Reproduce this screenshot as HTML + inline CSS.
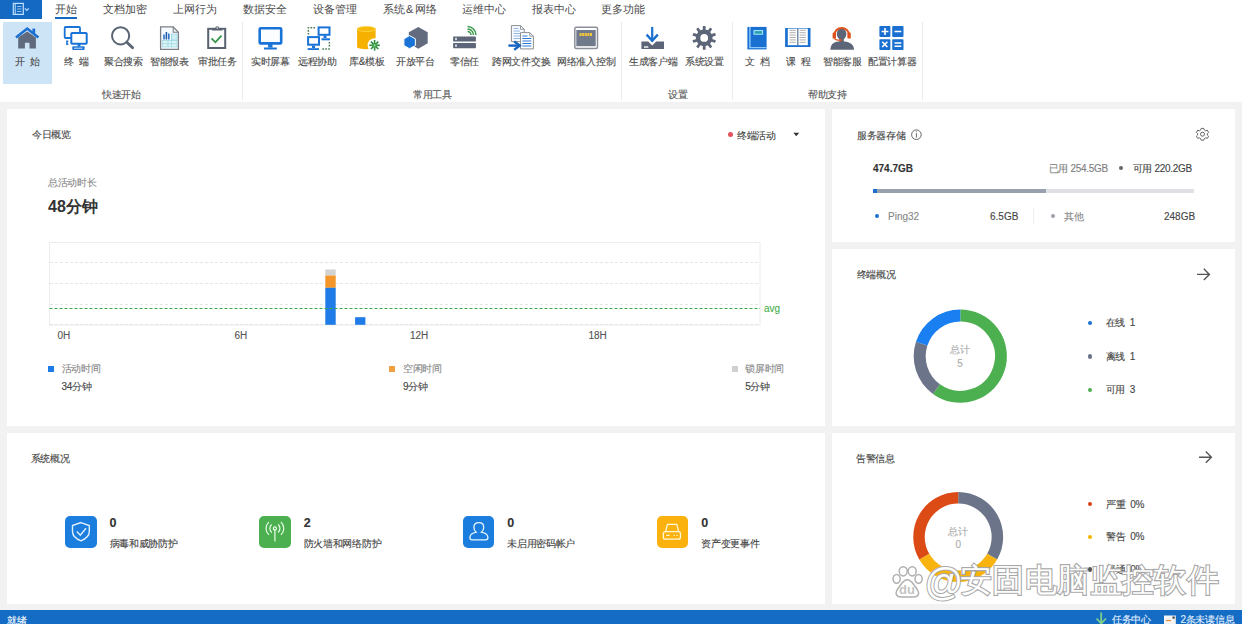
<!DOCTYPE html>
<html><head><meta charset="utf-8">
<style>
*{box-sizing:border-box}
html,body{margin:0;padding:0}
body{width:1242px;height:624px;position:relative;overflow:hidden;background:#f2f2f2;font-family:"Liberation Sans",sans-serif;color:#444}
.a{position:absolute;white-space:nowrap}
.t{position:absolute;white-space:nowrap;line-height:1;-webkit-text-stroke:0.12px currentColor}
.tab{font-size:11px;color:#4a4a4a;top:4px;-webkit-text-stroke:0}
.lb{font-size:10px;letter-spacing:-0.3px;color:#4a4a4a;top:56.6px}
.gl{font-size:10px;letter-spacing:-0.3px;color:#555;top:90px}
.sep{position:absolute;top:21.5px;width:1px;height:78.5px;background:#ececec}
.panel{position:absolute;background:#fff}
.ic{position:absolute}
</style></head>
<body>
<!-- ribbon -->
<div class="a" style="left:0;top:0;width:1242px;height:102px;background:#fff"></div>
<div class="a" style="left:0;top:0;width:42px;height:19px;background:#1469c2"></div>
<div class="a" style="left:55px;top:17px;width:22px;height:2px;background:#1469c2"></div>
<div class="t tab" style="left:55px">开始</div>
<div class="t tab" style="left:103px">文档加密</div>
<div class="t tab" style="left:173px">上网行为</div>
<div class="t tab" style="left:243px">数据安全</div>
<div class="t tab" style="left:313px">设备管理</div>
<div class="t tab" style="left:382.5px">系统<span style="margin:0 1.5px">&amp;</span>网络</div>
<div class="t tab" style="left:462px">运维中心</div>
<div class="t tab" style="left:532px">报表中心</div>
<div class="t tab" style="left:601px">更多功能</div>

<div class="a" style="left:3px;top:22px;width:49px;height:62px;background:#cde4f7"></div>

<svg class="a" style="left:0;top:0" width="1242" height="102" viewBox="0 0 1242 102">
<!-- app button icon -->
<rect x="13.3" y="3.4" width="10" height="11" fill="none" stroke="#bfe0ff" stroke-width="1.2"/>
<line x1="15.2" y1="3.5" x2="15.2" y2="14.5" stroke="#bfe0ff" stroke-width="1"/>
<path d="M17 6.5h4.5M17 9h4.5M17 11.5h4.5" stroke="#9fcaf2" stroke-width="0.9"/>
<path d="M24.8 8.3l2 2 2-2" fill="none" stroke="#bfe0ff" stroke-width="1.2"/>
<!-- home -->
<path d="M18.2 37.5L27.2 31.5L35.9 37.5V48.4H29.5V42.8H24.9V48.4H18.2Z" fill="#5f6a7d"/>
<path d="M16 37.4L27.2 28.6L38.4 37.6" fill="none" stroke="#1a6fd0" stroke-width="2.6" stroke-linejoin="miter"/>
<rect x="32.4" y="28.6" width="2.8" height="4.6" fill="#1a6fd0"/>
<!-- terminal -->
<rect x="64.7" y="27" width="15.3" height="11" rx="1" fill="none" stroke="#1a73d6" stroke-width="1.8"/>
<path d="M68.3 41.2h-1.4v3h1.4" fill="none" stroke="#1a73d6" stroke-width="1.5"/>
<rect x="71.3" y="33" width="15.4" height="10.8" rx="0.8" fill="#fff" stroke="#1a73d6" stroke-width="2"/>
<rect x="77.6" y="43.5" width="2.8" height="3" fill="#1a73d6"/>
<rect x="72.3" y="46.3" width="12.3" height="3.7" rx="1" fill="#1a73d6"/>
<line x1="74" y1="48.2" x2="82.5" y2="48.2" stroke="#fff" stroke-width="0.8"/>
<!-- search -->
<circle cx="120.6" cy="35.8" r="8.6" fill="none" stroke="#5a6475" stroke-width="2"/>
<line x1="126.8" y1="42.2" x2="132.6" y2="47.8" stroke="#5a6475" stroke-width="2.8" stroke-linecap="round"/>
<!-- report -->
<path d="M160.6 26.8H173.2L178.4 32.2V49.3H160.6Z" fill="#f6fbff" stroke="#7c7f85" stroke-width="1.3"/>
<path d="M173.2 26.8V32.2H178.4" fill="none" stroke="#7c7f85" stroke-width="1.1"/>
<rect x="163.2" y="34.5" width="1.6" height="5" fill="#2a72c8"/>
<rect x="165.6" y="32" width="1.6" height="7.5" fill="#1f5faa"/>
<rect x="168" y="33.5" width="1.6" height="6" fill="#2a72c8"/>
<rect x="171.5" y="34" width="5.5" height="6" fill="#cdeff4" stroke="#8fd0dc" stroke-width="0.6"/>
<rect x="162.5" y="40.5" width="14.5" height="6.5" fill="#d8f4f4" stroke="#8fd0dc" stroke-width="0.6"/>
<path d="M162.5 43.7H177M168 40.5V47M171.5 34V47" stroke="#8fd0dc" stroke-width="0.6"/>
<!-- approval -->
<rect x="208.2" y="28.8" width="17" height="19.2" fill="#fdfdfd" stroke="#596270" stroke-width="2"/>
<path d="M211.8 30.4L212.8 28.2H215.3A1.9 1.9 0 0 1 219.1 28.2H221.6L222.6 30.4Z" fill="#596270"/><circle cx="217.2" cy="27.9" r="0.75" fill="#fff"/>
<path d="M211.5 38.4L215.4 42.3L221.5 35.6" fill="none" stroke="#35964a" stroke-width="1.8"/>
<!-- realtime screen -->
<rect x="259.7" y="28.2" width="21.5" height="15.2" rx="1" fill="#fbfdff" stroke="#1a73d6" stroke-width="2.6"/>
<rect x="268.1" y="44" width="4.4" height="3.6" fill="#1a73d6"/>
<rect x="264" y="47.5" width="12.8" height="2" fill="#1a73d6"/>
<!-- remote assist -->
<rect x="318.6" y="27.4" width="10.9" height="7.4" fill="#fff" stroke="#1a73d6" stroke-width="2"/>
<rect x="323.5" y="35.5" width="3" height="2.5" fill="#1a73d6"/>
<rect x="321.5" y="38.3" width="8.5" height="2" fill="#1a73d6"/>
<rect x="308.1" y="37.1" width="10.9" height="7.6" fill="#fff" stroke="#1a73d6" stroke-width="2"/>
<rect x="312" y="45.5" width="3" height="2.5" fill="#1a73d6"/>
<rect x="307.6" y="48.2" width="11.4" height="1.8" fill="#1a73d6"/>
<path d="M307.6 27.7h1.6M310.5 27.7h1.6M313.4 27.7h1.6M308.4 30.1v1.6M308.4 33v1.6" stroke="#4a7a52" stroke-width="1.5"/>
<path d="M322.4 49h1.6M325.3 49h1.6M328.2 49h1.6M329.4 41.9v1.6M329.4 44.8v1.6" stroke="#4a7a52" stroke-width="1.5"/>
<!-- library -->
<path d="M357.1 29V47.2A9.25 2 0 0 0 375.6 47.2V29Z" fill="#f5b000"/>
<ellipse cx="366.35" cy="29" rx="9.25" ry="2.6" fill="#f7b90a" stroke="#ffd64a" stroke-width="0.8"/>
<circle cx="374.6" cy="45.3" r="7" fill="#fff"/>
<g stroke="#2e8b3d" stroke-width="1.6">
<line x1="374.6" y1="40" x2="374.6" y2="50.6"/><line x1="369.3" y1="45.3" x2="379.9" y2="45.3"/>
<line x1="370.9" y1="41.6" x2="378.3" y2="49"/><line x1="378.3" y1="41.6" x2="370.9" y2="49"/>
</g>
<circle cx="374.6" cy="45.3" r="2.2" fill="#3aa04a"/>
<circle cx="374.6" cy="45.3" r="0.9" fill="#b8f0b0"/>
<!-- open platform -->
<path d="M418.3 26.9L427.7 32.3V43.3L418.3 48.7L408.8 43.3V32.3Z" fill="#626c7e"/>
<path d="M409.5 35.6L415.4 38.8V45.5L409.5 48.7L403.9 45.5V38.8Z" fill="#1a73d6" stroke="#fff" stroke-width="1"/>
<!-- zero trust -->
<rect x="453.1" y="36.4" width="22.8" height="5.1" rx="0.6" fill="#5c6678"/>
<rect x="453.1" y="43.1" width="22.8" height="5.1" rx="0.6" fill="#5c6678"/>
<rect x="455.3" y="37.8" width="1.4" height="2.3" fill="#fff"/>
<rect x="455.3" y="44.5" width="1.4" height="2.3" fill="#fff"/>
<g fill="none" stroke="#3a9a4a" stroke-width="1.5">
<path d="M467.5 31.5A3.5 3.5 0 0 1 471 35"/>
<path d="M467.5 29A6 6 0 0 1 473.5 35"/>
<path d="M467.5 26.5A8.5 8.5 0 0 1 476 35"/>
</g>
<!-- file exchange -->
<path d="M511.4 25.6H520.5L524.2 29.3V41.6H511.4Z" fill="#f8fbff" stroke="#8c8f95" stroke-width="1"/>
<path d="M520.5 25.6V29.3H524.2" fill="none" stroke="#8c8f95" stroke-width="0.9"/>
<path d="M513.5 28.5h5M513.5 31h6.5M513.5 33.5h6.5M513.5 36h6.5M513.5 38.5h6.5" stroke="#7aa7dd" stroke-width="0.8"/>
<path d="M520.5 32.6H529.8L533.4 36.2V48.9H520.5Z" fill="#fff" stroke="#8c8f95" stroke-width="1"/>
<path d="M529.8 32.6V36.2H533.4" fill="none" stroke="#8c8f95" stroke-width="0.9"/>
<path d="M522.3 36h5.2M522.3 38.5h9M522.3 41h9M522.3 43.5h9M522.3 46h9" stroke="#2d78d2" stroke-width="1"/>
<path d="M508.4 45.6H518" stroke="#1565c0" stroke-width="2.4"/>
<path d="M514.2 41.5L519.8 45.6L514.2 49.8" fill="none" stroke="#1565c0" stroke-width="2.4"/>
<!-- network access -->
<rect x="574.8" y="27.3" width="22.7" height="21.2" rx="1.5" fill="#fff" stroke="#8a8f99" stroke-width="1.5"/>
<rect x="576.3" y="30" width="19.4" height="16.2" fill="#707a8a"/>
<path d="M579.6 34.6h2M582.2 34.6h2M584.8 34.6h2M587.4 34.6h2M590 34.6h2" stroke="#f4c83a" stroke-width="3"/>
<!-- generate client -->
<path d="M641.4 41.5H648.2L652.2 45.5L656.2 41.5H664V48.9H641.4Z" fill="#5c6678"/>
<rect x="644" y="46.3" width="4.3" height="1.4" fill="#fff"/>
<line x1="652.2" y1="26.9" x2="652.2" y2="41.5" stroke="#1a6fd0" stroke-width="2.2"/>
<path d="M646.6 34.6L652.2 40.8L657.8 34.6" fill="none" stroke="#1a6fd0" stroke-width="2.4"/>
<!-- gear -->
<g transform="translate(704.2 37.9)" fill="#5c6678">
<circle r="8.4"/>
<g id="teeth">
<rect x="-1.4" y="-11.9" width="2.8" height="5" rx="0.6"/>
<rect x="-1.4" y="-11.9" width="2.8" height="5" rx="0.6" transform="rotate(36)"/>
<rect x="-1.4" y="-11.9" width="2.8" height="5" rx="0.6" transform="rotate(72)"/>
<rect x="-1.4" y="-11.9" width="2.8" height="5" rx="0.6" transform="rotate(108)"/>
<rect x="-1.4" y="-11.9" width="2.8" height="5" rx="0.6" transform="rotate(144)"/>
<rect x="-1.4" y="-11.9" width="2.8" height="5" rx="0.6" transform="rotate(180)"/>
<rect x="-1.4" y="-11.9" width="2.8" height="5" rx="0.6" transform="rotate(216)"/>
<rect x="-1.4" y="-11.9" width="2.8" height="5" rx="0.6" transform="rotate(252)"/>
<rect x="-1.4" y="-11.9" width="2.8" height="5" rx="0.6" transform="rotate(288)"/>
<rect x="-1.4" y="-11.9" width="2.8" height="5" rx="0.6" transform="rotate(324)"/>
</g>
<circle r="3.9" fill="#fff"/>
</g>
<!-- doc book -->
<rect x="747.4" y="26.9" width="19.2" height="22.5" fill="#1a70d0"/>
<rect x="749.2" y="27" width="1.4" height="20.5" fill="#8cc8ff"/>
<rect x="749.2" y="47" width="17.4" height="1.2" fill="#8cc8ff"/>
<rect x="754" y="30.6" width="8.6" height="3.6" fill="#2a9bb0" stroke="#a8f0ff" stroke-width="1"/>
<!-- course book -->
<path d="M785.1 27.9H797.6L798.2 28.5L798.8 27.9H810.5V47.1H785.1Z" fill="#1a70d0"/>
<rect x="787.8" y="28.6" width="9.6" height="16.6" fill="#fff"/>
<rect x="798.2" y="28.6" width="9.6" height="16.6" fill="#fff"/>
<line x1="797.8" y1="28.6" x2="797.8" y2="45.5" stroke="#777" stroke-width="0.8"/>
<path d="M789.5 30.3h6.2M789.5 32.7h6.2M789.5 35.1h6.2M789.5 37.5h6.2M789.5 39.9h6.2M789.5 42.3h6.2M799.6 30.3h6.2M799.6 32.7h6.2M799.6 35.1h6.2M799.6 37.5h6.2M799.6 39.9h6.2M799.6 42.3h6.2" stroke="#9a9a9a" stroke-width="0.8"/>
<!-- customer service -->
<ellipse cx="841.6" cy="34" rx="4.8" ry="5.7" fill="#5c6678"/>
<rect x="839.4" y="38" width="4.4" height="4" fill="#5c6678"/>
<path d="M830.4 49.7C830.4 44.6 833.6 41.8 838.4 41.5H844.8C849.6 41.8 854 44.6 854 49.7Z" fill="#5c6678"/>
<path d="M834.4 35.2A7.3 7.3 0 0 1 849 35.2" fill="none" stroke="#e0521c" stroke-width="2"/>
<rect x="832.6" y="32.6" width="3.4" height="6" rx="1.2" fill="#e0521c"/>
<rect x="847.4" y="32.6" width="3.4" height="6" rx="1.2" fill="#e0521c"/>
<path d="M834.3 38.2Q835.3 40.3 840.2 40.2" fill="none" stroke="#e0521c" stroke-width="1.3"/>
<circle cx="840.8" cy="40.2" r="1.1" fill="#e0521c"/>
<!-- calculator -->
<rect x="879.4" y="26.1" width="11" height="10.8" rx="0.8" fill="#1a70d0"/>
<rect x="892.2" y="26.1" width="11.3" height="10.8" rx="0.8" fill="#1a70d0"/>
<rect x="879.4" y="39.2" width="11" height="10.8" rx="0.8" fill="#1a70d0"/>
<rect x="892.2" y="39.2" width="11.3" height="10.8" rx="0.8" fill="#1a70d0"/>
<path d="M881.6 31.5h6.8M885 28.1v6.8M894.5 31.5h6.8M894.5 43h6.8M894.5 46.2h6.8" stroke="#fff" stroke-width="1.6"/>
<path d="M882.2 41.8l5.2 5.2M887.4 41.8l-5.2 5.2" stroke="#fff" stroke-width="1.6"/>
</svg>
<div class="t lb" style="left:15px">开<span style="margin-left:5px">始</span></div>
<div class="t lb" style="left:64px">终<span style="margin-left:5px">端</span></div>
<div class="t lb" style="left:104px">聚合搜索</div>
<div class="t lb" style="left:150px">智能报表</div>
<div class="t lb" style="left:198px">审批任务</div>
<div class="t lb" style="left:251px">实时屏幕</div>
<div class="t lb" style="left:298px">远程协助</div>
<div class="t lb" style="left:349px">库&amp;模板</div>
<div class="t lb" style="left:396px">开放平台</div>
<div class="t lb" style="left:450px">零信任</div>
<div class="t lb" style="left:492px">跨网文件交换</div>
<div class="t lb" style="left:557px">网络准入控制</div>
<div class="t lb" style="left:629px">生成客户端</div>
<div class="t lb" style="left:685px">系统设置</div>
<div class="t lb" style="left:745px">文<span style="margin-left:5px">档</span></div>
<div class="t lb" style="left:786px">课<span style="margin-left:5px">程</span></div>
<div class="t lb" style="left:823px">智能客服</div>
<div class="t lb" style="left:868px">配置计算器</div>

<div class="t gl" style="left:102px">快速开始</div>
<div class="t gl" style="left:413px">常用工具</div>
<div class="t gl" style="left:668px">设置</div>
<div class="t gl" style="left:808px">帮助支持</div>

<div class="sep" style="left:242px"></div>
<div class="sep" style="left:621px"></div>
<div class="sep" style="left:732px"></div>
<div class="sep" style="left:922px"></div>

<!-- panels -->
<div class="panel" style="left:7px;top:109px;width:818px;height:317px"></div>
<div class="panel" style="left:832px;top:109px;width:403px;height:133px"></div>
<div class="panel" style="left:832px;top:249px;width:403px;height:177px"></div>
<div class="panel" style="left:7px;top:433px;width:818px;height:171px"></div>
<div class="panel" style="left:832px;top:433px;width:403px;height:171px"></div>


<!-- today overview -->
<div class="t" style="left:32px;top:130px;font-size:10px;color:#444;letter-spacing:-0.3px">今日概览</div>
<div class="a" style="left:727.8px;top:131.5px;width:5.6px;height:5.6px;border-radius:50%;background:#e5505a"></div>
<div class="t" style="left:737px;top:131px;font-size:10px;color:#444;letter-spacing:-0.3px">终端活动</div>
<svg class="a" style="left:793px;top:132px" width="7" height="5"><path d="M0.3 0.7H6.2L3.25 4.2Z" fill="#333"/></svg>
<div class="t" style="left:48px;top:178px;font-size:10px;color:#8a8a8a;letter-spacing:-0.3px">总活动时长</div>
<div class="t" style="left:48px;top:199px;font-size:16px;font-weight:bold;color:#333;-webkit-text-stroke:0">48分钟</div>
<svg class="a" style="left:0;top:230px" width="830" height="120" viewBox="0 230 830 120">
<rect x="49.5" y="242.5" width="710.5" height="82.5" fill="none" stroke="#ececec" stroke-width="1"/>
<path d="M50 262.5H760M50 283.5H760M50 304.5H760" stroke="#e6e6e6" stroke-width="1" stroke-dasharray="3 2"/>
<path d="M50 324.5H760" stroke="#e6e6e6" stroke-width="1" stroke-dasharray="3 2"/>
<rect x="325.3" y="269.5" width="10.4" height="6" fill="#d2d2d2"/>
<rect x="325.3" y="275.5" width="10.4" height="12.3" fill="#f5962a"/>
<rect x="325.3" y="287.8" width="10.4" height="37" fill="#1f7be8"/>
<rect x="355.1" y="317.2" width="10.3" height="7.6" fill="#1f7be8"/>
<path d="M49.5 308.5H760" stroke="#3aa84a" stroke-width="1.2" stroke-dasharray="3 2"/>
</svg>
<div class="t" style="left:764px;top:304px;font-size:10px;color:#4caf50">avg</div>
<div class="t" style="left:57.5px;top:331px;font-size:10px;color:#555">0H</div>
<div class="t" style="left:234.5px;top:331px;font-size:10px;color:#555">6H</div>
<div class="t" style="left:410px;top:331px;font-size:10px;color:#555">12H</div>
<div class="t" style="left:588.4px;top:331px;font-size:10px;color:#555">18H</div>
<div class="a" style="left:48px;top:366px;width:6px;height:6px;background:#1f7be8"></div>
<div class="t" style="left:61.6px;top:364px;font-size:10px;color:#888;letter-spacing:-0.3px">活动时间</div>
<div class="t" style="left:61.6px;top:381.5px;font-size:10px;color:#444;letter-spacing:-0.3px">34分钟</div>
<div class="a" style="left:389px;top:366px;width:6px;height:6px;background:#f0a040"></div>
<div class="t" style="left:403px;top:364px;font-size:10px;color:#888;letter-spacing:-0.3px">空闲时间</div>
<div class="t" style="left:403px;top:381.5px;font-size:10px;color:#444;letter-spacing:-0.3px">9分钟</div>
<div class="a" style="left:732px;top:366px;width:6px;height:6px;background:#d0d0d0"></div>
<div class="t" style="left:745.2px;top:364px;font-size:10px;color:#888;letter-spacing:-0.3px">锁屏时间</div>
<div class="t" style="left:745.2px;top:381.5px;font-size:10px;color:#444;letter-spacing:-0.3px">5分钟</div>


<!-- storage -->
<div class="t" style="left:857px;top:130.5px;font-size:10px;color:#444;letter-spacing:-0.3px">服务器存储</div>
<svg class="a" style="left:905px;top:124px" width="20" height="20" viewBox="905 124 20 20">
<circle cx="916.4" cy="134.7" r="4.8" fill="none" stroke="#666" stroke-width="1"/>
<path d="M916.4 133.3V137.6" stroke="#666" stroke-width="1"/><circle cx="916.4" cy="131.8" r="0.6" fill="#666"/>
</svg>
<svg class="a" style="left:1190px;top:122px" width="25" height="25" viewBox="1190 122 25 25">
<g transform="translate(1202.5 134.2)" fill="none" stroke="#666" stroke-width="1">
<path d="M-1.3 -5.8L1.3 -5.8L1.8 -4.2L3.2 -3.4L4.8 -4L6.1 -1.8L4.9 -0.7V0.9L6.1 2L4.8 4.2L3.2 3.6L1.8 4.4L1.3 6H-1.3L-1.8 4.4L-3.2 3.6L-4.8 4.2L-6.1 2L-4.9 0.9V-0.7L-6.1 -1.8L-4.8 -4L-3.2 -3.4L-1.8 -4.2Z"/>
<circle r="2"/>
</g>
</svg>
<div class="t" style="left:873px;top:164px;font-size:10px;font-weight:bold;color:#333">474.7GB</div>
<div class="t" style="left:1048.5px;top:163.5px;font-size:10px;color:#808080;letter-spacing:-0.3px">已用 254.5GB</div>
<div class="a" style="left:1119px;top:166px;width:4px;height:4px;border-radius:50%;background:#666"></div>
<div class="t" style="left:1132.5px;top:163.5px;font-size:10px;color:#444;letter-spacing:-0.3px">可用 220.2GB</div>
<div class="a" style="left:873px;top:189px;width:320.5px;height:4px;background:#dfe1e6"></div>
<div class="a" style="left:873px;top:189px;width:172.5px;height:4px;background:#99a1ae"></div>
<div class="a" style="left:873px;top:189px;width:3.5px;height:4px;background:#1a6fd0"></div>
<div class="a" style="left:874.8px;top:214px;width:4px;height:4px;border-radius:50%;background:#1a6fd0"></div>
<div class="t" style="left:888px;top:211.5px;font-size:10px;color:#888">Ping32</div>
<div class="t" style="left:990px;top:211.5px;font-size:10px;color:#444">6.5GB</div>
<div class="a" style="left:1033px;top:208px;width:1px;height:16px;background:#eee"></div>
<div class="a" style="left:1051px;top:214px;width:4px;height:4px;border-radius:50%;background:#9aa0ac"></div>
<div class="t" style="left:1064px;top:211.5px;font-size:10px;color:#888;letter-spacing:-0.3px">其他</div>
<div class="t" style="left:1164px;top:211.5px;font-size:10px;color:#444">248GB</div>

<!-- terminal overview -->
<div class="t" style="left:856.5px;top:270px;font-size:10px;color:#444;letter-spacing:-0.3px">终端概况</div>
<svg class="a" style="left:1190px;top:262px" width="25" height="25" viewBox="1190 262 25 25">
<path d="M1197 274.4H1209.2M1203.8 268.8L1209.4 274.4L1203.8 280" fill="none" stroke="#555" stroke-width="1.4"/>
</svg>
<svg class="a" style="left:900px;top:300px" width="120" height="260" viewBox="900 300 120 260">
<path d="M960.30 315.60A40.6 40.6 0 1 1 936.44 389.05" fill="none" stroke="#4caf50" stroke-width="12"/><path d="M936.44 389.05A40.6 40.6 0 0 1 921.69 343.65" fill="none" stroke="#6b7489" stroke-width="12"/><path d="M921.69 343.65A40.6 40.6 0 0 1 960.30 315.60" fill="none" stroke="#1a7ff0" stroke-width="12"/>
</svg>
<div class="t" style="left:940px;top:345px;width:40px;text-align:center;font-size:10px;color:#aaa;letter-spacing:-0.3px">总计</div>
<div class="t" style="left:940px;top:359px;width:40px;text-align:center;font-size:10px;color:#aaa">5</div>
<div class="a" style="left:1088px;top:320.5px;width:4.4px;height:4.4px;border-radius:50%;background:#1a6fd0"></div>
<div class="t" style="left:1105.5px;top:318px;font-size:10px;color:#444;letter-spacing:-0.3px">在线&nbsp;&nbsp;1</div>
<div class="a" style="left:1088px;top:354.3px;width:4.4px;height:4.4px;border-radius:50%;background:#6b7489"></div>
<div class="t" style="left:1105.5px;top:352px;font-size:10px;color:#444;letter-spacing:-0.3px">离线&nbsp;&nbsp;1</div>
<div class="a" style="left:1088px;top:387.6px;width:4.4px;height:4.4px;border-radius:50%;background:#4caf50"></div>
<div class="t" style="left:1105.5px;top:385px;font-size:10px;color:#444;letter-spacing:-0.3px">可用&nbsp;&nbsp;3</div>

<!-- system overview -->
<div class="t" style="left:30.5px;top:454px;font-size:10px;color:#444;letter-spacing:-0.3px">系统概况</div>
<div class="a" style="left:65.2px;top:515.5px;width:31.5px;height:32px;border-radius:5px;background:#1b7ddd"></div>
<svg class="a" style="left:65px;top:515px" width="32" height="33" viewBox="65 515 32 33">
<path d="M80.9 522.6L89.3 525.6V531.5Q89.3 537.5 80.9 540.8Q72.5 537.5 72.5 531.5V525.6Z" fill="none" stroke="#dff0ff" stroke-width="1.4"/>
<path d="M76.8 531.6L80.3 535.2L86 528.2" fill="none" stroke="#dff0ff" stroke-width="1.4"/>
</svg>
<div class="t" style="left:109.5px;top:517px;font-size:12.5px;font-weight:bold;color:#333">0</div>
<div class="t" style="left:109.5px;top:539px;font-size:10px;color:#444;letter-spacing:-0.3px">病毒和威胁防护</div>
<div class="a" style="left:259.2px;top:515.5px;width:31.5px;height:32px;border-radius:5px;background:#4cb050"></div>
<svg class="a" style="left:259px;top:515px" width="32" height="33" viewBox="259 515 32 33">
<g fill="none" stroke="#e8ffe8" stroke-width="1.2" stroke-linecap="round">
<path d="M274.9 529.5V541"/>
<circle cx="274.9" cy="528.4" r="1.6"/>
<path d="M271.4 524.8A5 5 0 0 0 271.4 532M278.4 524.8A5 5 0 0 1 278.4 532"/>
<path d="M268.6 522.4A8.3 8.3 0 0 0 268.6 534.4M281.2 522.4A8.3 8.3 0 0 1 281.2 534.4"/>
</g>
</svg>
<div class="t" style="left:303.7px;top:517px;font-size:12.5px;font-weight:bold;color:#333">2</div>
<div class="t" style="left:303.7px;top:539px;font-size:10px;color:#444;letter-spacing:-0.3px">防火墙和网络防护</div>
<div class="a" style="left:462.8px;top:515.5px;width:31.5px;height:32px;border-radius:5px;background:#1b7ddd"></div>
<svg class="a" style="left:462px;top:515px" width="33" height="33" viewBox="462 515 33 33">
<path d="M476.2 532.2C474.4 530.8 473.9 528.8 473.9 527.4C473.9 524.4 476 522.7 478.8 522.7C481.6 522.7 483.7 524.4 483.7 527.4C483.7 528.8 483.2 530.8 481.4 532.2C485.5 533 487.9 534.8 487.9 537.6C487.9 539 487.2 539.9 485.8 539.9H471.9C470.5 539.9 469.9 539 469.9 537.6C469.9 534.8 472.2 533 476.2 532.2Z" fill="none" stroke="#e8f6ff" stroke-width="1.3"/>
</svg>
<div class="t" style="left:507.3px;top:517px;font-size:12.5px;font-weight:bold;color:#333">0</div>
<div class="t" style="left:507.3px;top:539px;font-size:10px;color:#444;letter-spacing:-0.3px">未启用密码帐户</div>
<div class="a" style="left:656.8px;top:515.5px;width:31.5px;height:32px;border-radius:5px;background:#fbb20f"></div>
<svg class="a" style="left:656px;top:515px" width="33" height="33" viewBox="656 515 33 33">
<g fill="none" stroke="#fff8d8" stroke-width="1.3">
<path d="M665.6 531.6L667.4 524.4H676.8L678.6 531.6"/>
<rect x="663.3" y="531.6" width="17.2" height="7.5" rx="2.2"/>
</g>
<path d="M666.2 535.4h3.4M673.6 535.4h1.2M676.4 535.4h1.2" stroke="#fff8d8" stroke-width="1.4"/>
</svg>
<div class="t" style="left:701.3px;top:517px;font-size:12.5px;font-weight:bold;color:#333">0</div>
<div class="t" style="left:701.3px;top:539px;font-size:10px;color:#444;letter-spacing:-0.3px">资产变更事件</div>

<!-- alert -->
<div class="t" style="left:856px;top:453.5px;font-size:10px;color:#444;letter-spacing:-0.3px">告警信息</div>
<svg class="a" style="left:1190px;top:445px" width="25" height="25" viewBox="1190 445 25 25">
<path d="M1199 457.2H1211.2M1205.8 451.6L1211.4 457.2L1205.8 462.8" fill="none" stroke="#555" stroke-width="1.4"/>
</svg>
<svg class="a" style="left:900px;top:480px" width="120" height="120" viewBox="900 480 120 120">
<path d="M958.20 497.80A39.2 39.2 0 0 1 992.15 556.60" fill="none" stroke="#6b7489" stroke-width="11.5"/><path d="M992.15 556.60A39.2 39.2 0 0 1 924.25 556.60" fill="none" stroke="#f8b30f" stroke-width="11.5"/><path d="M924.25 556.60A39.2 39.2 0 0 1 958.20 497.80" fill="none" stroke="#dc4a16" stroke-width="11.5"/>
</svg>
<div class="t" style="left:938.2px;top:527px;width:40px;text-align:center;font-size:10px;color:#aaa;letter-spacing:-0.3px">总计</div>
<div class="t" style="left:938.2px;top:539.5px;width:40px;text-align:center;font-size:10px;color:#aaa">0</div>
<div class="a" style="left:1088px;top:501.9px;width:4.4px;height:4.4px;border-radius:50%;background:#d8401a"></div>
<div class="t" style="left:1106px;top:499.5px;font-size:10px;color:#444;letter-spacing:-0.3px">严重&nbsp;&nbsp;0%</div>
<div class="a" style="left:1088px;top:534.6px;width:4.4px;height:4.4px;border-radius:50%;background:#f5b300"></div>
<div class="t" style="left:1106px;top:532px;font-size:10px;color:#444;letter-spacing:-0.3px">警告&nbsp;&nbsp;0%</div>
<div class="a" style="left:1088px;top:567.4px;width:4.4px;height:4.4px;border-radius:50%;background:#555"></div>
<div class="t" style="left:1106px;top:565px;font-size:10px;color:#444;letter-spacing:-0.3px">普通&nbsp;&nbsp;0%</div>


<!-- watermark -->
<svg class="a" style="left:886px;top:560px" width="40" height="42" viewBox="886 560 40 42">
<g fill="#fff" stroke="#b0b0b0" stroke-width="1.5">
<ellipse cx="903.2" cy="571.3" rx="4" ry="4.6"/>
<ellipse cx="912.2" cy="571.3" rx="4" ry="4.6"/>
<ellipse cx="896.6" cy="578.8" rx="3.6" ry="4.4"/>
<ellipse cx="918.6" cy="578.8" rx="3.6" ry="4.4"/>
<path d="M907.3 579.8Q910.5 579.8 914 585Q919.6 591.5 918.4 594.5Q917.3 597.4 912.5 597H902.2Q897.4 597.4 896.3 594.5Q895.1 591.5 900.6 585Q904.1 579.8 907.3 579.8Z"/>
</g>
<text x="899" y="593.8" font-family="Liberation Sans" font-size="13" font-weight="bold" fill="#c4c4c4">du</text>
</svg>
<div class="t" style="left:924.4px;top:562.5px;font-size:38px;color:#fff;-webkit-text-stroke:2px #a8a8a8;paint-order:stroke fill">@</div>
<div class="t" style="left:960px;top:564px;font-size:32px;letter-spacing:0.4px;color:#fff;-webkit-text-stroke:2.2px #a8a8a8;paint-order:stroke fill">安固电脑监控软件</div>

<!-- status bar -->
<div class="a" style="left:0;top:610px;width:1242px;height:14px;background:#146cc4"></div>

<div class="t" style="left:7px;top:615.5px;font-size:10px;color:#fff;letter-spacing:-0.3px">就绪</div>
<svg class="a" style="left:1094px;top:610px" width="14" height="14" viewBox="1094 610 14 14">
<path d="M1101.2 612.5V624M1096.5 618.5L1101.2 623.5L1105.9 618.5" fill="none" stroke="#7fd08a" stroke-width="1.8"/>
</svg>
<div class="t" style="left:1112px;top:615px;font-size:10px;color:#e6f2ff;letter-spacing:-0.3px">任务中心</div>
<svg class="a" style="left:1163px;top:614px" width="14" height="10" viewBox="1163 614 14 10">
<rect x="1164" y="615.5" width="11.8" height="9" fill="#f4f4f4"/>
<path d="M1166 620.5h5" stroke="#e88a3a" stroke-width="1.2"/>
<rect x="1172.5" y="616.5" width="2.2" height="2.2" fill="#444"/>
</svg>
<div class="t" style="left:1180.5px;top:615px;font-size:10px;color:#e6f2ff;letter-spacing:-0.3px">2条未读信息</div>
</body></html>
